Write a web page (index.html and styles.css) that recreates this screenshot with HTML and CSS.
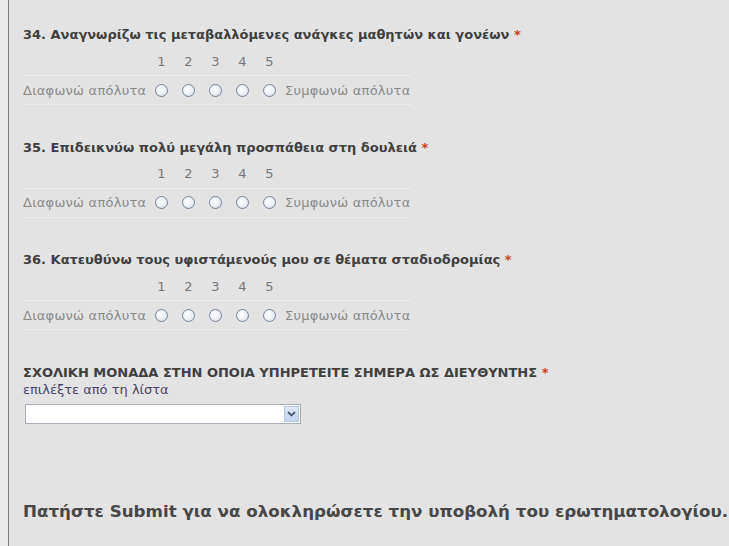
FILE: index.html
```html
<!DOCTYPE html>
<html lang="el">
<head>
<meta charset="utf-8">
<title>Ερωτηματολόγιο</title>
<link rel="stylesheet" href="styles.css">
</head>
<body>
<div class="page">
  <div class="form">
    <div class="item">
      <div class="title">34. Αναγνωρίζω τις μεταβαλλόμενες ανάγκες μαθητών και γονέων <span class="req">*</span></div>
      <div class="scale">
        <div class="row nums">
          <span class="lab"></span><span class="c">1</span><span class="c">2</span><span class="c">3</span><span class="c">4</span><span class="c">5</span><span class="lab"></span>
        </div>
        <div class="row opts">
          <span class="lab left">Διαφωνώ απόλυτα</span><span class="c"><span class="radio"></span></span><span class="c"><span class="radio"></span></span><span class="c"><span class="radio"></span></span><span class="c"><span class="radio"></span></span><span class="c"><span class="radio"></span></span><span class="lab right">Συμφωνώ απόλυτα</span>
        </div>
      </div>
    </div>
    <div class="item">
      <div class="title">35. Επιδεικνύω πολύ μεγάλη προσπάθεια στη δουλειά <span class="req">*</span></div>
      <div class="scale">
        <div class="row nums">
          <span class="lab"></span><span class="c">1</span><span class="c">2</span><span class="c">3</span><span class="c">4</span><span class="c">5</span><span class="lab"></span>
        </div>
        <div class="row opts">
          <span class="lab left">Διαφωνώ απόλυτα</span><span class="c"><span class="radio"></span></span><span class="c"><span class="radio"></span></span><span class="c"><span class="radio"></span></span><span class="c"><span class="radio"></span></span><span class="c"><span class="radio"></span></span><span class="lab right">Συμφωνώ απόλυτα</span>
        </div>
      </div>
    </div>
    <div class="item">
      <div class="title">36. Κατευθύνω τους υφιστάμενούς μου σε θέματα σταδιοδρομίας <span class="req">*</span></div>
      <div class="scale">
        <div class="row nums">
          <span class="lab"></span><span class="c">1</span><span class="c">2</span><span class="c">3</span><span class="c">4</span><span class="c">5</span><span class="lab"></span>
        </div>
        <div class="row opts">
          <span class="lab left">Διαφωνώ απόλυτα</span><span class="c"><span class="radio"></span></span><span class="c"><span class="radio"></span></span><span class="c"><span class="radio"></span></span><span class="c"><span class="radio"></span></span><span class="c"><span class="radio"></span></span><span class="lab right">Συμφωνώ απόλυτα</span>
        </div>
      </div>
    </div>
    <div class="item">
      <div class="title">ΣΧΟΛΙΚΗ ΜΟΝΑΔΑ ΣΤΗΝ ΟΠΟΙΑ ΥΠΗΡΕΤΕΙΤΕ ΣΗΜΕΡΑ ΩΣ ΔΙΕΥΘΥΝΤΗΣ <span class="req">*</span></div>
      <div class="help">επιλέξτε από τη λίστα</div>
      <div class="select">
        <span class="value"></span>
        <span class="arrow"><svg width="9" height="6" viewBox="0 0 9 6"><path d="M1 1 L4.5 4.5 L8 1" fill="none" stroke="#4d5a78" stroke-width="1.8"/></svg></span>
      </div>
    </div>
    <div class="submit">Πατήστε Submit για να ολοκληρώσετε την υποβολή του ερωτηματολογίου.</div>
  </div>
</div>
</body>
</html>
```

FILE: styles.css
```css
html, body {
  margin: 0;
  padding: 0;
}
body {
  background: #ebebeb;
  font-family: "DejaVu Sans", Verdana, sans-serif;
  font-size: 13px;
  color: #444;
}
.page {
  padding-left: 8px;
  min-height: 546px;
}
.form {
  background: #e3e3e3;
  border-left: 1px solid #7a7a7a;
  min-height: 546px;
  padding: 26px 0 0 14px;
  box-sizing: border-box;
  overflow: hidden;
}
.item {
  margin-bottom: 33.6px;
}
.title {
  font-weight: bold;
  line-height: 18px;
  color: #3f3f3f;
  white-space: nowrap;
}
.req {
  color: #c8401f;
}
.scale {
  display: inline-block;
  margin-top: 3px;
}
.row {
  display: flex;
  align-items: center;
  height: 28px;
  border-bottom: 1px solid #ededed;
}
.lab {
  color: #8a8a8a;
  white-space: nowrap;
  letter-spacing: 0.25px;
}
.nums .lab:first-child,
.lab.left {
  width: 125px;
}
.nums .lab:last-child,
.lab.right {
  width: 126px;
  padding-left: 2px;
}
.c {
  width: 27px;
  display: flex;
  justify-content: center;
  align-items: center;
  color: #777;
}
.radio {
  width: 11px;
  height: 11px;
  border: 1px solid #77849c;
  border-radius: 50%;
  background: radial-gradient(circle at 40% 40%, #ffffff 0%, #eef2f6 45%, #cfd9e3 100%);
}
.help {
  color: #45456a;
  line-height: 16px;
}
.select {
  margin: 6px 0 0 2px;
  width: 274px;
  height: 18px;
  background: #fff;
  border: 1px solid #a7aeb8;
  display: flex;
  justify-content: flex-end;
  align-items: stretch;
}
.arrow {
  width: 15px;
  margin: 1px;
  background: linear-gradient(#dfe8f7, #c3d3ee);
  border: 1px solid #b7c6e3;
  box-sizing: border-box;
  display: flex;
  align-items: center;
  justify-content: center;
}
.submit {
  margin-top: 77px;
  font-size: 16.7px;
  font-weight: bold;
  color: #474747;
  white-space: nowrap;
}
```
